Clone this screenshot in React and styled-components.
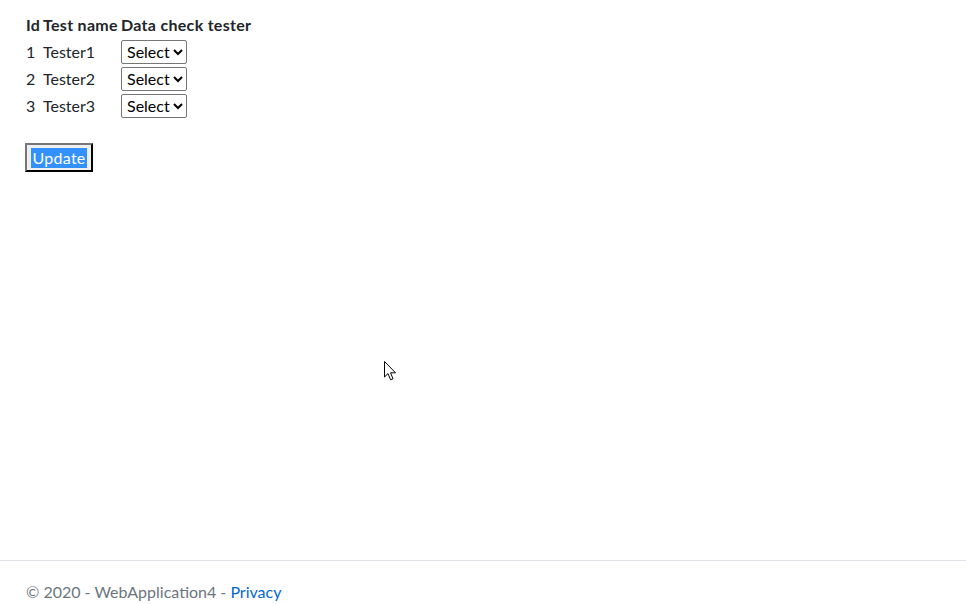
import React from 'react';
import styled, { createGlobalStyle } from 'styled-components';

const GlobalStyle = createGlobalStyle`
  html, body {
    margin: 0;
    padding: 0;
    overflow: hidden;
    background: #fff;
  }

  body {
    font-family: "Segoe UI", "Lato", "Noto Sans", sans-serif;
    font-size: 16px;
    line-height: 1.5;
    color: #212529;
  }
`;

const Page = styled.div`
  position: relative;
  display: flex;
  flex-direction: column;
`;

const Main = styled.main`
  box-sizing: border-box;
  height: 560px;
  padding: 10px 0 0 24px;
`;

const Table = styled.table`
  border-collapse: separate;
  border-spacing: 2px;
`;

const HeadCell = styled.th`
  padding: 0;
  height: 25px;
  width: ${(p) => (p.$width ? `${p.$width}px` : 'auto')};
  font-weight: 700;
  letter-spacing: 0.3px;
  text-align: left;
  white-space: nowrap;
  line-height: 24px;
`;

const Cell = styled.td`
  padding: 0;
  height: 25px;
  line-height: 24px;
  white-space: nowrap;
  vertical-align: middle;
`;

const Picker = styled.select`
  display: block;
  height: 24px;
  width: 66px;
  padding: 0 0 0 1px;
  border: 1px solid #767676;
  border-radius: 2px;
  background: #fff;
  color: #000;
  font-family: inherit;
  font-size: 16px;
`;

const UpdateButton = styled.button`
  margin: 23px 0 0 1px;
  width: 68px;
  height: 29px;
  padding: 0;
  border: 2px outset #767676;
  border-color: #767676 #111 #111 #767676;
  background: #efefef;
  font-family: inherit;
  font-size: 16px;
  letter-spacing: 0.3px;
  line-height: 20px;
  color: #000;
`;

const Selected = styled.span`
  display: inline-block;
  background: #3390ff;
  color: #fff;
  padding: 0 1px;
`;

const Footer = styled.footer`
  box-sizing: border-box;
  height: 44px;
  border-top: 1px solid #dee2e6;
  padding-left: 26px;
  line-height: 62px;
  color: #6c757d;
  white-space: nowrap;
`;

const FooterLink = styled.a`
  color: #0366d6;
  text-decoration: none;
`;

const Pointer = styled.svg`
  position: absolute;
  left: 384px;
  top: 361px;
  pointer-events: none;
`;

const testers = [
  { id: 1, name: 'Tester1' },
  { id: 2, name: 'Tester2' },
  { id: 3, name: 'Tester3' },
];

const App = () => (
  <>
    <GlobalStyle />
    <Page>
      <Main>
        <form onSubmit={(e) => e.preventDefault()}>
          <Table>
            <thead>
              <tr>
                <HeadCell $width={15}>Id</HeadCell>
                <HeadCell $width={76}>Test name</HeadCell>
                <HeadCell>Data check tester</HeadCell>
              </tr>
            </thead>
            <tbody>
              {testers.map((t) => (
                <tr key={t.id}>
                  <Cell>{t.id}</Cell>
                  <Cell>{t.name}</Cell>
                  <Cell>
                    <Picker defaultValue="">
                      <option value="">Select</option>
                    </Picker>
                  </Cell>
                </tr>
              ))}
            </tbody>
          </Table>
          <UpdateButton type="submit">
            <Selected>Update</Selected>
          </UpdateButton>
        </form>
      </Main>
      <Footer>
        © 2020 - WebApplication4 - <FooterLink href="#">Privacy</FooterLink>
      </Footer>
      <Pointer width="13" height="20" viewBox="0 0 13 20">
        <path
          d="M0.5 0.5 L0.5 16 L4 12.6 L6.6 18.8 L9 17.8 L6.5 11.8 L11.5 11.8 Z"
          fill="#fff"
          stroke="#000"
          strokeWidth="1"
          strokeLinejoin="miter"
        />
      </Pointer>
    </Page>
  </>
);

export default App;
